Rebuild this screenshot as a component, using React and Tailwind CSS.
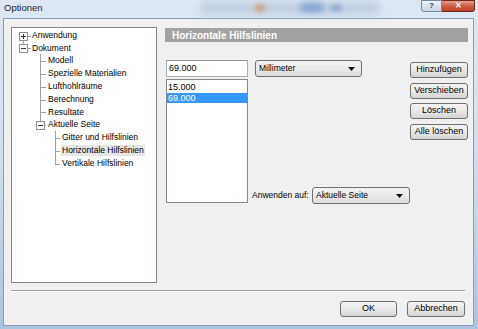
import React from "react";

const rows = [
  { t: "Anwendung", level: 0 },
  { t: "Dokument", level: 0 },
  { t: "Modell", level: 1 },
  { t: "Spezielle Materialien", level: 1 },
  { t: "Lufthohlräume", level: 1 },
  { t: "Berechnung", level: 1 },
  { t: "Resultate", level: 1 },
  { t: "Aktuelle Seite", level: 1 },
  { t: "Gitter und Hilfslinien", level: 2 },
  { t: "Horizontale Hilfslinien", level: 2, selected: true },
  { t: "Vertikale Hilfslinien", level: 2 },
];

const indent = ["pl-[20px]", "pl-[36px]", "pl-[50px]"];
const cy = (i) => 7.5 + 12.8 * i;

function Box({ x, y, plus }) {
  const c = Math.round(y);
  return (
    <g>
      <rect x={x - 4 + 0.5} y={c - 4 + 0.5} width="8" height="8" fill="#fdfdfd" stroke="#8f8f8f" />
      <line x1={x - 2} x2={x + 3} y1={c + 0.5} y2={c + 0.5} stroke="#333" />
      {plus && <line x1={x + 0.5} x2={x + 0.5} y1={c - 2} y2={c + 3} stroke="#333" />}
    </g>
  );
}

function TreeLines() {
  const h = (x1, x2, i) => (
    <line key={`h${x1}${i}`} x1={x1} x2={x2} y1={Math.round(cy(i)) + 0.5} y2={Math.round(cy(i)) + 0.5} stroke="#a0a0a0" />
  );
  return (
    <svg className="absolute inset-0 pointer-events-none" width="144" height="254">
      <line x1="11.5" x2="11.5" y1="12" y2="17" stroke="#a0a0a0" />
      <line x1="28.5" x2="28.5" y1="26" y2={Math.round(cy(7)) - 4} stroke="#a0a0a0" />
      <line x1="43.5" x2="43.5" y1="103" y2={Math.round(cy(10)) + 1} stroke="#a0a0a0" />
      {h(15, 19, 0)}
      {h(15, 19, 1)}
      {[2, 3, 4, 5, 6].map((i) => h(28, 34, i))}
      {h(32, 34, 7)}
      {[8, 9, 10].map((i) => h(43, 48, i))}
      <Box x={11} y={cy(0)} plus />
      <Box x={11} y={cy(1)} />
      <Box x={28} y={cy(7)} />
    </svg>
  );
}

const btn =
  "flex items-center justify-center h-[16px] border border-[#707070] rounded-[3px] bg-linear-to-b from-[#f4f4f4] via-[#e9e9e9] to-[#d3d3d3] text-[9px] text-black";

function Combo({ label, className }) {
  return (
    <div
      className={`flex items-center justify-between h-[17px] pl-[3px] pr-[6px] border border-[#707070] rounded-[3px] bg-linear-to-b from-[#f3f3f3] via-[#ebebeb] to-[#dcdcdc] text-[8.5px] ${className}`}
    >
      <span>{label}</span>
      <svg width="7" height="4" viewBox="0 0 7 4">
        <path d="M0 0h7L3.5 4z" fill="#111" />
      </svg>
    </div>
  );
}

export default function App() {
  return (
    <div className="relative w-[478px] h-[329px] overflow-hidden flex flex-col bg-linear-to-b from-[#dde8f4] via-[#cfdeef] to-[#a9c3e2] font-['Liberation_Sans',Arial,sans-serif] text-black">
      {/* title bar */}
      <div className="relative h-[18px] flex items-start justify-between">
        <div className="absolute left-[200px] top-[2px] w-[180px] h-[12px] rounded-full bg-[#b3c4da] blur-[4px] opacity-80" />
        <div className="absolute left-[255px] top-[4px] w-[10px] h-[8px] rounded-full bg-[#d49a72] blur-[2px] opacity-80" />
        <div className="absolute left-[300px] top-[3px] w-[24px] h-[9px] rounded-full bg-[#6b90c4] blur-[3px] opacity-70" />
        <div className="absolute left-[330px] top-[4px] w-[12px] h-[8px] rounded-full bg-[#7f9bc4] blur-[2px] opacity-60" />
        <span className="relative pl-[4px] pt-[2px] text-[9.5px] leading-[12px] text-[#1c1c1c]">Optionen</span>
        <div className="relative flex mr-[3px]">
          <div className="w-[21px] h-[12px] flex items-center justify-center border border-[#7388a3] rounded-bl-[3px] bg-linear-to-b from-[#eef3f9] to-[#c3d3e6] text-[8px] leading-none font-bold text-[#34455c]">
            ?
          </div>
          <div className="w-[33px] h-[12px] flex items-center justify-center border border-[#6d2b20] border-l-0 rounded-br-[3px] bg-linear-to-b from-[#e3a293] via-[#cf5a43] to-[#c23f2a] text-[8px] leading-none font-bold text-white">
            ✕
          </div>
        </div>
      </div>

      {/* client */}
      <div className="flex-1 ml-[3px] mr-[4px] mb-[3px] border border-[#8d9db3] bg-[#f0f0f0] flex flex-col">
        <div className="flex pl-[7px] pt-[8px]">
          {/* tree */}
          <div className="relative w-[146px] h-[256px] border border-[#828790] bg-white text-[8.5px]">
            <TreeLines />
            <div className="flex flex-col pt-[1px]">
              {rows.map((r) => (
                <div key={r.t} className={`h-[12.8px] flex items-center ${indent[r.level]}`}>
                  <span className={`leading-[11px] px-[1px] -ml-[1px] ${r.selected ? "bg-[#e6e6e6]" : ""}`}>{r.t}</span>
                </div>
              ))}
            </div>
          </div>

          {/* right panel */}
          <div className="ml-[8px] mt-[1px] w-[303px] flex flex-col">
            <div className="h-[14px] bg-[#a2a2a2] text-white font-bold text-[10px] pl-[7px] flex items-center">
              Horizontale Hilfslinien
            </div>
            <div className="mt-[18px] flex">
              <div className="ml-[1px] w-[82px] flex flex-col">
                <div className="h-[17px] border border-[#abadb3] border-t-[#8e9096] bg-white text-[9px] pl-[2px] flex items-center">
                  69.000
                </div>
                <div className="mt-[2px] h-[124px] border border-[#828790] bg-white pt-[2px] text-[9px]">
                  <div className="h-[10.5px] leading-[10.5px] pl-[1px]">15.000</div>
                  <div className="h-[10.5px] leading-[10.5px] pl-[1px] bg-[#3399ff] text-white">69.000</div>
                </div>
              </div>
              <div className="w-[162px] h-[144px] flex flex-col justify-between">
                <Combo label="Millimeter" className="ml-[7px] w-[107px]" />
                <div className="flex items-center justify-between pl-[4px]">
                  <span className="text-[8.5px]">Anwenden auf:</span>
                  <Combo label="Aktuelle Seite" className="w-[98px] h-[16px]" />
                </div>
              </div>
              <div className="w-[58px] flex flex-col gap-[4.5px] pt-[2px]">
                <div className={btn}>Hinzufügen</div>
                <div className={btn}>Verschieben</div>
                <div className={btn}>Löschen</div>
                <div className={btn}>Alle löschen</div>
              </div>
            </div>
          </div>
        </div>

        <div className="mt-[7px] ml-[7px] mr-[8px] h-[2px] border-t border-[#a0a0a0] border-b border-b-white" />

        <div className="mt-[9px] flex justify-end gap-[10px] pr-[8px]">
          <div className={`${btn} w-[57px]`}>OK</div>
          <div className={`${btn} w-[58px]`}>Abbrechen</div>
        </div>
      </div>
    </div>
  );
}
